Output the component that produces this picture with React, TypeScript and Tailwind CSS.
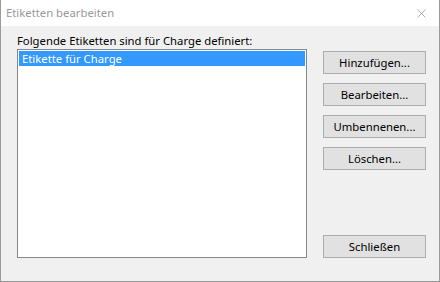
import { X } from "lucide-react";

const font = { fontFamily: '"Noto Sans", "Liberation Sans", sans-serif' };

function Btn({ label, className = "" }: { label: string; className?: string }) {
  return (
    <button className={`h-[23px] w-[103px] border border-[#adadad] bg-[#e1e1e1] text-[11.3px] leading-none text-black ${className}`}>
      {label}
    </button>
  );
}

export default function App() {
  return (
    <div className="flex h-[282px] w-[440px] flex-col overflow-hidden bg-[#f0f0f0] text-[11.3px]" style={font}>
      <div className="flex h-[26px] items-center justify-between border-x border-[#9a9a9a] bg-white pl-[5px] pr-[10px]">
        <span className="text-[11.3px] text-[#999999]">Etiketten bearbeiten</span>
        <X size={15} strokeWidth={1.1} className="text-[#8a8a8a]" />
      </div>

      <div className="flex flex-1 border-x border-b border-[#9a9a9a] pl-[16px] pr-[13px] pt-[7px]">
        <div className="flex flex-col">
          <p className="h-[16px] leading-[16px] text-black">Folgende Etiketten sind für Charge definiert:</p>
          <div className="h-[209px] w-[290px] border border-[#828790] bg-white p-[1px]">
            <div className="h-[15px] bg-[#3399ff] pl-[3px] leading-[15px] text-white">Etikette für Charge</div>
          </div>
        </div>

        <div className="ml-auto flex flex-col pt-[18px]">
          <div className="flex flex-col gap-[9px]">
            <Btn label="Hinzufügen..." />
            <Btn label="Bearbeiten..." />
            <Btn label="Umbennenen..." />
            <Btn label="Löschen..." />
          </div>
          <Btn label="Schließen" className="mt-[65px]" />
        </div>
      </div>
    </div>
  );
}
